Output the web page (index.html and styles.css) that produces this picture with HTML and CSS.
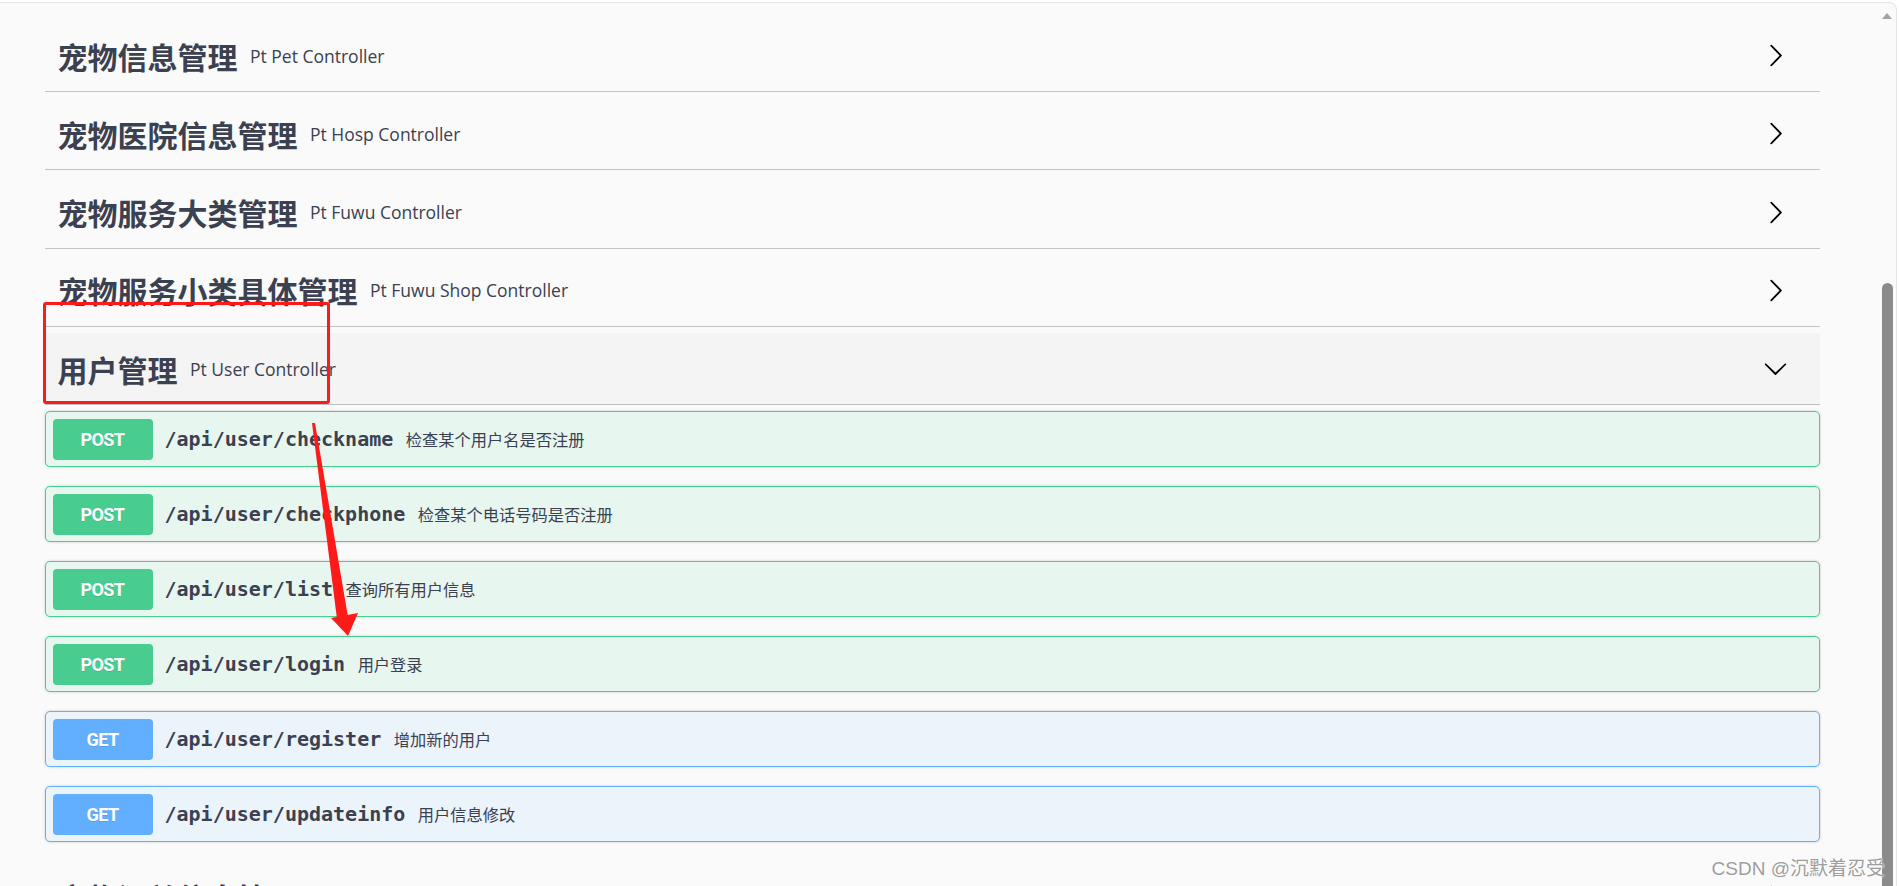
FILE: index.html
```html
<!DOCTYPE html>
<html lang="zh-CN">
<head>
<meta charset="utf-8">
<title>Swagger UI</title>
<link rel="stylesheet" href="styles.css">
</head>
<body>
<div class="window">
  <main class="main">
    <div class="content">
      <section class="tag-section">
        <h3 class="tag"><span class="tag-title">宠物信息管理</span><small class="tag-desc">Pt Pet Controller</small>
          <svg class="arrow" viewBox="0 0 20 20"><path d="M13.25 10L6.109 2.58a.697.697 0 0 1 0-.979.68.68 0 0 1 .969 0l7.83 7.908a.697.697 0 0 1 0 .979l-7.83 7.908a.68.68 0 0 1-.969 0 .697.697 0 0 1 0-.979L13.25 10z"/></svg>
        </h3>
      </section>
      <section class="tag-section">
        <h3 class="tag"><span class="tag-title">宠物医院信息管理</span><small class="tag-desc">Pt Hosp Controller</small>
          <svg class="arrow" viewBox="0 0 20 20"><path d="M13.25 10L6.109 2.58a.697.697 0 0 1 0-.979.68.68 0 0 1 .969 0l7.83 7.908a.697.697 0 0 1 0 .979l-7.83 7.908a.68.68 0 0 1-.969 0 .697.697 0 0 1 0-.979L13.25 10z"/></svg>
        </h3>
      </section>
      <section class="tag-section">
        <h3 class="tag"><span class="tag-title">宠物服务大类管理</span><small class="tag-desc">Pt Fuwu Controller</small>
          <svg class="arrow" viewBox="0 0 20 20"><path d="M13.25 10L6.109 2.58a.697.697 0 0 1 0-.979.68.68 0 0 1 .969 0l7.83 7.908a.697.697 0 0 1 0 .979l-7.83 7.908a.68.68 0 0 1-.969 0 .697.697 0 0 1 0-.979L13.25 10z"/></svg>
        </h3>
      </section>
      <section class="tag-section">
        <h3 class="tag"><span class="tag-title">宠物服务小类具体管理</span><small class="tag-desc">Pt Fuwu Shop Controller</small>
          <svg class="arrow" viewBox="0 0 20 20"><path d="M13.25 10L6.109 2.58a.697.697 0 0 1 0-.979.68.68 0 0 1 .969 0l7.83 7.908a.697.697 0 0 1 0 .979l-7.83 7.908a.68.68 0 0 1-.969 0 .697.697 0 0 1 0-.979L13.25 10z"/></svg>
        </h3>
      </section>
      <section class="tag-section">
        <h3 class="tag tag-open"><span class="tag-title">用户管理</span><small class="tag-desc">Pt User Controller</small>
          <svg class="arrow" viewBox="0 0 20 20"><path d="M17.418 6.109c.272-.268.709-.268.979 0s.271.701 0 .969l-7.908 7.83c-.27.268-.707.268-.979 0l-7.908-7.83c-.27-.268-.27-.701 0-.969.271-.268.709-.268.979 0L10 13.25l7.418-7.141z"/></svg>
        </h3>
        <div class="ops">
          <div class="op op-post"><span class="method">POST</span><span class="path">/api/user/checkname</span><span class="summary">检查某个用户名是否注册</span></div>
          <div class="op op-post"><span class="method">POST</span><span class="path">/api/user/checkphone</span><span class="summary">检查某个电话号码是否注册</span></div>
          <div class="op op-post"><span class="method">POST</span><span class="path">/api/user/list</span><span class="summary">查询所有用户信息</span></div>
          <div class="op op-post"><span class="method">POST</span><span class="path">/api/user/login</span><span class="summary">用户登录</span></div>
          <div class="op op-get"><span class="method">GET</span><span class="path">/api/user/register</span><span class="summary">增加新的用户</span></div>
          <div class="op op-get"><span class="method">GET</span><span class="path">/api/user/updateinfo</span><span class="summary">用户信息修改</span></div>
        </div>
      </section>
      <section class="tag-section">
        <h3 class="tag"><span class="tag-title">宠物订单信息管理</span><small class="tag-desc">Pt Order Controller</small>
          <svg class="arrow" viewBox="0 0 20 20"><path d="M13.25 10L6.109 2.58a.697.697 0 0 1 0-.979.68.68 0 0 1 .969 0l7.83 7.908a.697.697 0 0 1 0 .979l-7.83 7.908a.68.68 0 0 1-.969 0 .697.697 0 0 1 0-.979L13.25 10z"/></svg>
        </h3>
      </section>
    </div>
  </main>
  <div class="scrollbar"><span class="scroll-up"></span><span class="thumb"></span></div>
</div>

<div class="annot-box"></div>
<svg class="annot-arrow" viewBox="0 0 1901 886" width="1901" height="886">
  <polygon points="312,423 315,423 348,617 337,619" fill="#ff1a1a"/>
  <polygon points="331,618 358,613 348,636" fill="#ff1a1a"/>
</svg>
<div class="watermark">CSDN @沉默着忍受</div>
</body>
</html>
```

FILE: styles.css
```css
html, body {
  margin: 0;
  padding: 0;
}

body {
  width: 1901px;
  height: 886px;
  overflow: hidden;
  position: relative;
  background: #ffffff;
  font-family: "Open Sans", "Noto Sans CJK SC", sans-serif;
  color: #3b4151;
}

.window {
  margin-top: 2px;
  width: 1897px;
  height: 884px;
  box-sizing: border-box;
  border-top: 1px solid #e4e4e4;
  border-right: 1px solid #e4e4e4;
  border-top-right-radius: 8px;
  background: #fafafa;
  display: flex;
  overflow: hidden;
}

.main {
  width: 1878px;
  flex: none;
  box-sizing: border-box;
  padding: 17px 0 0 45px;
}

.content {
  width: 1775px;
}

.tag-section {
  display: flex;
  flex-direction: column;
}

.tag {
  display: flex;
  align-items: center;
  height: 71px;
  margin: 0 0 6.25px;
  padding: 0 32px 0 12.5px;
  border-bottom: 1px solid rgba(59, 65, 81, 0.3);
  font-weight: normal;
}

.tag-open {
  background: #f4f4f4;
}

.tag-title {
  font-family: "Noto Sans CJK SC", sans-serif;
  font-size: 30px;
  font-weight: 700;
  line-height: 1;
  color: #3b4151;
}

.tag-desc {
  flex: 1;
  padding: 0 12.5px;
  font-family: "Open Sans", "Noto Sans CJK SC", sans-serif;
  font-size: 17.5px;
  font-weight: 400;
  color: #3b4151;
}

.arrow {
  width: 25px;
  height: 25px;
  fill: #000;
  flex: none;
}

.ops {
  display: flex;
  flex-direction: column;
}

.op {
  display: flex;
  align-items: center;
  height: 41px;
  padding: 6.5px;
  margin: 0 0 19px;
  border: 1px solid;
  border-radius: 5px;
  box-shadow: 0 0 3px rgba(0, 0, 0, 0.19);
}

.op-post {
  background: #e8f6f0;
  border-color: #49cc90;
}

.op-get {
  background: #ebf3fb;
  border-color: #61affe;
}

.method {
  width: 100px;
  height: 41px;
  flex: none;
  display: flex;
  align-items: center;
  justify-content: center;
  border-radius: 4px;
  color: #fff;
  font-family: "Liberation Sans Narrow", Roboto, sans-serif;
  font-weight: 700;
  font-size: 18px;
  letter-spacing: -0.6px;
  text-shadow: 0 1px 0 rgba(0, 0, 0, 0.1);
}

.op-post .method {
  background: #49cc90;
}

.op-get .method {
  background: #61affe;
}

.path {
  margin-left: 12px;
  font-family: "DejaVu Sans Mono", "Liberation Mono", monospace;
  font-weight: 700;
  font-size: 20px;
  color: #3b4151;
}

.summary {
  padding-left: 12.5px;
  font-family: "Open Sans", "Noto Sans CJK SC", sans-serif;
  font-size: 16.25px;
  color: #3b4151;
}

.scrollbar {
  flex: 1;
  display: flex;
  flex-direction: column;
  align-items: flex-start;
  padding-left: 4px;
}

.scroll-up {
  margin-top: 10px;
  width: 0;
  height: 0;
  border-left: 5.5px solid transparent;
  border-right: 5.5px solid transparent;
  border-bottom: 6px solid #a3a3a3;
}

.thumb {
  margin-top: 264px;
  width: 11px;
  height: 640px;
  border-radius: 6px 6px 0 0;
  background: #8b8b8b;
}

.annot-box {
  position: absolute;
  left: 43px;
  top: 302px;
  width: 281px;
  height: 96px;
  border: 3.5px solid #ff1a1a;
  border-radius: 3px;
}

.annot-arrow {
  position: absolute;
  left: 0;
  top: 0;
  pointer-events: none;
}

.watermark {
  position: absolute;
  right: 16px;
  top: 853px;
  font-family: "Liberation Sans", "Noto Sans CJK SC", sans-serif;
  font-size: 19px;
  color: #9d9d9d;
  text-shadow: 0 0 2px #ffffff, 0 0 1px #ffffff;
  white-space: nowrap;
}
```
